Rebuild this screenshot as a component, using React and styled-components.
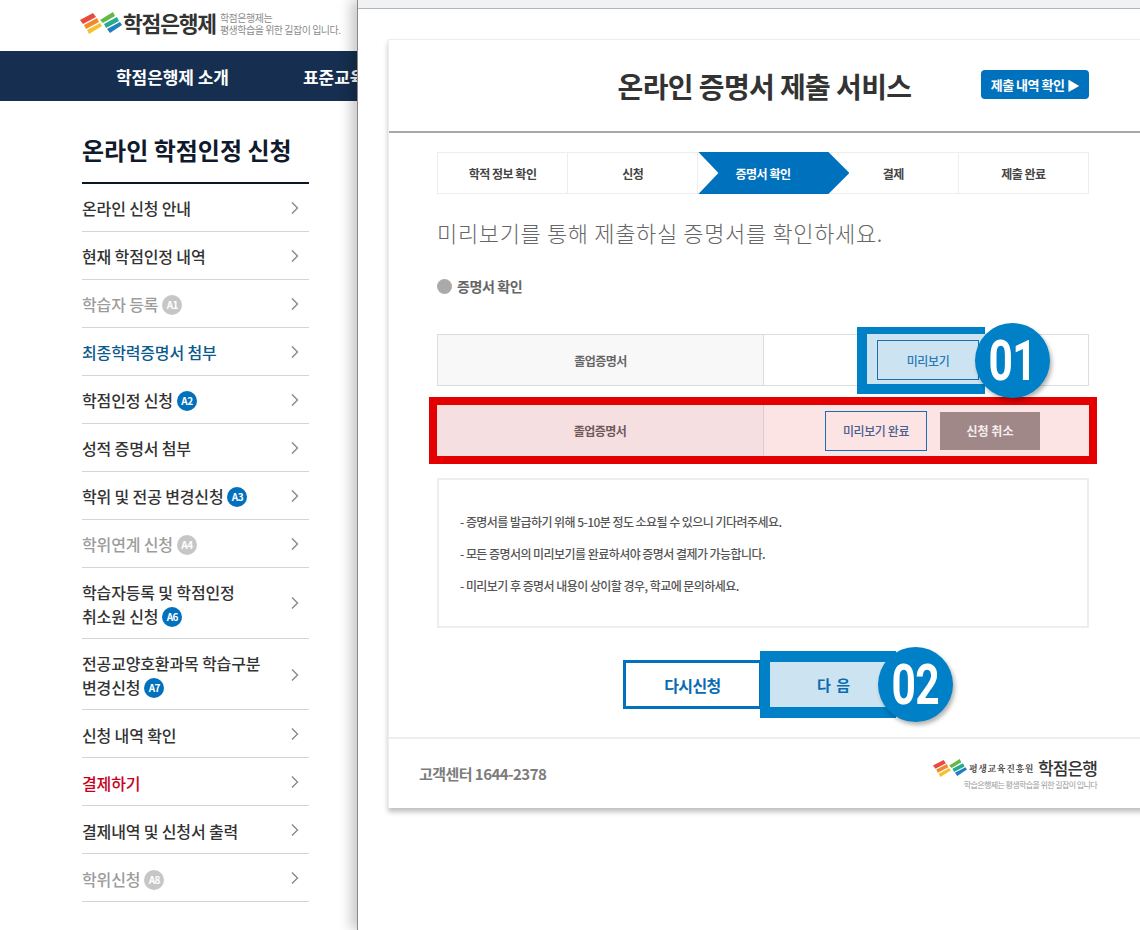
import React from 'react';
import styled, { createGlobalStyle } from 'styled-components';

const GlobalStyle = createGlobalStyle`
  html, body {
    margin: 0;
    padding: 0;
    background: #fff;
  }
  body {
    font-family: "Noto Sans CJK KR", "Noto Sans", sans-serif;
  }
  * {
    box-sizing: border-box;
  }
`;

const Page = styled.div`
  display: flex;
  width: 1140px;
  height: 930px;
  overflow: hidden;
`;

/* left: the site behind the popup */
const Site = styled.div`
  flex: none;
  width: 357px;
  overflow: hidden;
`;

const SiteTop = styled.div`
  display: flex;
  align-items: center;
  height: 51px;
  padding: 0 0 6px 80px;
`;

const BrandName = styled.span`
  margin-left: 1px;
  font-size: 21.5px;
  font-weight: 700;
  letter-spacing: -1.2px;
  color: #333;
  white-space: nowrap;
`;

const BrandNote = styled.span`
  margin: 2px 0 0 4px;
  font-size: 10px;
  line-height: 12px;
  letter-spacing: -0.5px;
  color: #8c8c8c;
  white-space: nowrap;
`;

const NavBar = styled.div`
  display: flex;
  align-items: center;
  gap: 74px;
  height: 50px;
  padding-left: 116px;
  background: #162f50;
`;

const NavItem = styled.span`
  font-size: 17px;
  font-weight: 700;
  letter-spacing: -0.05px;
  color: #fff;
  white-space: nowrap;
`;

const Side = styled.div`
  width: 227px;
  margin-left: 82px;
`;

const SideTitle = styled.h2`
  height: 83px;
  margin: 0;
  padding-top: 31px;
  border-bottom: 2px solid #0c1428;
  font-size: 24px;
  line-height: 36px;
  font-weight: 700;
  color: #111a2c;
  white-space: nowrap;
`;

const SideRow = styled.div`
  display: flex;
  align-items: center;
  justify-content: space-between;
  height: ${(p) => (p.$double ? '71.4px' : '47.95px')};
  padding-right: 10px;
  border-bottom: 1px solid #d4d4d4;
`;

const colors = { normal: '#333', muted: '#9c9c9c', link: '#0b5a8c', alert: '#c8001e' };

const SideLabel = styled.span`
  padding-top: 2px;
  font-size: 16px;
  line-height: 24px;
  font-weight: 500;
  letter-spacing: -0.15px;
  color: ${(p) => colors[p.$tone || 'normal']};
`;

const Badge = styled.span`
  display: inline-flex;
  align-items: center;
  justify-content: center;
  width: 20px;
  height: 20px;
  margin-left: 4px;
  border-radius: 50%;
  vertical-align: 2px;
  background: ${(p) => (p.$off ? '#c6c6c6' : '#0071bc')};
  font-size: 10px;
  font-weight: 700;
  letter-spacing: -0.5px;
  color: #fff;
`;

const ChevronMark = styled.svg`
  flex: none;
  margin-top: 1px;
`;

/* right: popup window */
const Popup = styled.div`
  position: relative;
  flex: 1;
  border-left: 1px solid #8a8a8a;
  background: #fff;
  box-shadow: -6px 0 12px rgba(0, 0, 0, 0.22);
`;

const WindowBar = styled.div`
  height: 9px;
  border-bottom: 1px solid #b4b4b4;
  background: #f1f2f4;
`;

const Card = styled.div`
  width: 760px;
  height: 769px;
  margin: 30px 0 0 30px;
  border: 1px solid #eee;
  border-bottom: 0;
  background: #fff;
  box-shadow: 0 4px 5px rgba(0, 0, 0, 0.25);
`;

const CardHead = styled.div`
  display: grid;
  grid-template-columns: 1fr auto 1fr;
  align-items: center;
  height: 93px;
  padding: 0 58px;
  border-bottom: 2px solid #a8a8a8;
`;

const CardTitle = styled.h1`
  grid-column: 2;
  margin: 0 7px 0 0;
  font-size: 28px;
  font-weight: 700;
  letter-spacing: -0.6px;
  color: #333;
  white-space: nowrap;
`;

const HistoryButton = styled.span`
  justify-self: end;
  display: flex;
  align-items: center;
  justify-content: center;
  width: 108px;
  height: 29px;
  margin-top: -2px;
  border-radius: 4px;
  background: #0071bc;
  font-size: 13px;
  font-weight: 700;
  letter-spacing: -0.5px;
  color: #fff;
  white-space: nowrap;
`;

const Body = styled.div`
  width: 652px;
  margin-left: 48px;
`;

const Steps = styled.div`
  display: flex;
  height: 42px;
  margin-top: 19px;
  border: 1px solid #eee;
`;

const Step = styled.div`
  position: relative;
  z-index: ${(p) => (p.$active ? 1 : 0)};
  flex: 1;
  display: flex;
  align-items: center;
  justify-content: center;
  border-left: ${(p) => (p.$first ? '0' : '1px solid #eee')};
  font-size: 12px;
  font-weight: 700;
  letter-spacing: -0.5px;
  color: ${(p) => (p.$active ? '#fff' : '#444')};

  ${(p) =>
    p.$active &&
    `
    &::before {
      content: '';
      position: absolute;
      top: -1px;
      left: 0;
      width: 151px;
      height: 42px;
      background: #0071bc;
      clip-path: polygon(0 0, 130px 0, 151px 50%, 130px 100%, 0 100%, 20px 50%);
    }
  `}
`;

const StepText = styled.span`
  position: relative;
`;

const Lead = styled.p`
  height: 34px;
  margin: 21px 0 0;
  font-size: 22px;
  line-height: 34px;
  font-weight: 300;
  letter-spacing: 0.65px;
  color: #666;
  white-space: nowrap;
`;

const SectionTitle = styled.h3`
  display: flex;
  align-items: center;
  gap: 5px;
  height: 20px;
  margin: 27px 0 0;
  font-size: 14px;
  font-weight: 700;
  letter-spacing: -0.4px;
  color: #666;
`;

const Dot = styled.i`
  width: 15px;
  height: 15px;
  border-radius: 50%;
  background: #aaa;
`;

const DocRow = styled.div`
  display: grid;
  grid-template-columns: ${(p) => (p.$flagged ? '327px' : '326px')} 1fr;
  height: ${(p) => (p.$flagged ? '51px' : '52px')};
  margin-top: ${(p) => (p.$flagged ? '19px' : '38px')};
  border: ${(p) => (p.$flagged ? '0' : '1px solid #ddd')};
  outline: ${(p) => (p.$flagged ? '8px solid #e40000' : 'none')};
`;

const DocName = styled.div`
  display: flex;
  align-items: center;
  justify-content: center;
  border-right: 1px solid ${(p) => (p.$flagged ? '#e3c8c8' : '#ddd')};
  background: ${(p) => (p.$flagged ? '#f6dfe0' : '#f8f8f8')};
  font-size: 12px;
  font-weight: 700;
  letter-spacing: -0.5px;
  color: ${(p) => (p.$flagged ? '#6e5a5a' : '#666')};
`;

const DocActions = styled.div`
  display: flex;
  align-items: center;
  gap: 13px;
  padding-left: ${(p) => (p.$flagged ? '61px' : '113px')};
  background: ${(p) => (p.$flagged ? '#fde4e4' : '#fff')};
`;

const Callout = styled.div`
  position: relative;
  width: 102px;
  height: 40px;
`;

const CalloutFrame = styled.div`
  position: absolute;
  top: -13px;
  left: -20px;
  width: 128px;
  height: 67px;
  border: solid #0080c6;
  border-width: 7px 0 10px 10px;
  background: #cce3f2;
`;

const OutlineButton = styled.span`
  position: relative;
  display: flex;
  align-items: center;
  justify-content: center;
  width: 102px;
  height: 40px;
  border: 1px solid #1b6fb0;
  background: ${(p) => (p.$filled ? '#cce3f2' : 'transparent')};
  font-size: 12px;
  font-weight: 500;
  letter-spacing: -0.4px;
  color: ${(p) => (p.$filled ? '#2a7ab8' : '#4a5f8c')};
  white-space: nowrap;
`;

const CancelButton = styled.span`
  display: flex;
  align-items: center;
  justify-content: center;
  width: 100px;
  height: 38px;
  background: #a08888;
  font-size: 12px;
  font-weight: 700;
  color: #f6eeee;
`;

const Marker = styled.span`
  position: absolute;
  z-index: 2;
  top: ${(p) => p.$top};
  left: ${(p) => p.$left};
  display: flex;
  align-items: center;
  justify-content: center;
  width: 75px;
  height: 75px;
  border-radius: 50%;
  background: #0080c6;
  box-shadow: 2px 3px 4px rgba(0, 0, 0, 0.3);
`;

const MarkerText = styled.span`
  display: block;
  font-family: Roboto, "Liberation Sans", sans-serif;
  font-size: 56px;
  line-height: 1;
  font-weight: 700;
  letter-spacing: -1px;
  color: #fff;
  transform: scaleX(0.76);
`;

const Notes = styled.div`
  display: flex;
  flex-direction: column;
  gap: 13px;
  height: 150px;
  margin-top: 22px;
  padding: 32px 0 0 21px;
  border: 2px solid #eee;
`;

const Note = styled.p`
  margin: 0;
  font-size: 12px;
  line-height: 19px;
  font-weight: 500;
  letter-spacing: -0.55px;
  color: #555;
`;

const ButtonRow = styled.div`
  position: relative;
  display: flex;
  align-items: center;
  height: 67px;
  margin-top: 23px;
  padding-left: 186px;
`;

const AgainButton = styled.span`
  display: flex;
  align-items: center;
  justify-content: center;
  width: 139px;
  height: 49px;
  border: 3px solid #0071bc;
  font-size: 16px;
  font-weight: 700;
  letter-spacing: -0.6px;
  color: #0a6cb0;
`;

const NextButton = styled.span`
  display: flex;
  align-items: center;
  justify-content: center;
  width: 136px;
  height: 67px;
  margin-left: -2px;
  padding-left: 2px;
  border: solid #0080c6;
  border-width: 11px 0 11px 10px;
  background: #cce3f2;
  font-size: 15px;
  font-weight: 700;
  letter-spacing: 1px;
  color: #0a6cb0;
`;

const CardFoot = styled.div`
  display: flex;
  align-items: center;
  justify-content: space-between;
  height: 71px;
  margin-top: 19px;
  padding: 0 50px 0 30px;
  border-top: 2px solid #eee;
`;

const Contact = styled.span`
  font-size: 15px;
  font-weight: 700;
  letter-spacing: -0.55px;
  color: #7c7c7c;
`;

const FootBrand = styled.div`
  display: flex;
  flex-direction: column;
  align-items: flex-end;
`;

const FootRow = styled.div`
  display: flex;
  align-items: center;
  height: 22px;
`;

const FootOrg = styled.span`
  margin: 0 4px 0 2px;
  font-family: "Noto Serif CJK KR", "Noto Sans CJK KR", serif;
  font-size: 9px;
  font-weight: 700;
  letter-spacing: 0.6px;
  color: #444;
  white-space: nowrap;
`;

const FootName = styled.span`
  font-size: 17px;
  line-height: 22px;
  font-weight: 500;
  letter-spacing: -0.9px;
  color: #333;
  white-space: nowrap;
`;

const FootNote = styled.span`
  font-size: 8px;
  line-height: 11px;
  letter-spacing: -0.6px;
  color: #999;
  white-space: nowrap;
`;

function BrandMark({ width = 42, height = 22 }) {
  return (
    <svg width={width} height={height} viewBox="0 0 42 22">
      <polygon points="0,8 13,1 16,5 3,12" fill="#ea4a3c" />
      <polygon points="4,13 17,6 19,10 6,17" fill="#f08a2c" />
      <polygon points="7,18 20,11 22,14 9,22" fill="#f6c12e" />
      <polygon points="20,8 33,0 35,4 23,11" fill="#63b946" />
      <polygon points="24,12 37,5 39,9 26,16" fill="#27ab8e" />
      <polygon points="27,17 40,10 42,13 30,21" fill="#1f7fc0" />
    </svg>
  );
}

function Chevron() {
  return (
    <ChevronMark width="8" height="14" viewBox="0 0 8 14">
      <polyline points="1,1.5 6.5,7 1,12.5" fill="none" stroke="#888" strokeWidth="1.4" />
    </ChevronMark>
  );
}

const menu = [
  { lines: ['온라인 신청 안내'] },
  { lines: ['현재 학점인정 내역'] },
  { lines: ['학습자 등록'], badge: 'A1', off: true, tone: 'muted' },
  { lines: ['최종학력증명서 첨부'], tone: 'link' },
  { lines: ['학점인정 신청'], badge: 'A2' },
  { lines: ['성적 증명서 첨부'] },
  { lines: ['학위 및 전공 변경신청'], badge: 'A3' },
  { lines: ['학위연계 신청'], badge: 'A4', off: true, tone: 'muted' },
  { lines: ['학습자등록 및 학점인정', '취소원 신청'], badge: 'A6' },
  { lines: ['전공교양호환과목 학습구분', '변경신청'], badge: 'A7' },
  { lines: ['신청 내역 확인'] },
  { lines: ['결제하기'], tone: 'alert' },
  { lines: ['결제내역 및 신청서 출력'] },
  { lines: ['학위신청'], badge: 'A8', off: true, tone: 'muted' },
];

const steps = ['학적 정보 확인', '신청', '증명서 확인', '결제', '제출 완료'];

const notes = [
  '- 증명서를 발급하기 위해 5-10분 정도 소요될 수 있으니 기다려주세요.',
  '- 모든 증명서의 미리보기를 완료하셔야 증명서 결제가 가능합니다.',
  '- 미리보기 후 증명서 내용이 상이할 경우, 학교에 문의하세요.',
];

export default function App() {
  return (
    <Page>
      <GlobalStyle />
      <Site>
        <SiteTop>
          <BrandMark />
          <BrandName>학점은행제</BrandName>
          <BrandNote>
            학점은행제는
            <br />
            평생학습을 위한 길잡이 입니다.
          </BrandNote>
        </SiteTop>
        <NavBar>
          <NavItem>학점은행제 소개</NavItem>
          <NavItem>표준교육과정</NavItem>
        </NavBar>
        <Side>
          <SideTitle>온라인 학점인정 신청</SideTitle>
          {menu.map((item) => (
            <SideRow key={item.lines[0]} $double={item.lines.length > 1}>
              <SideLabel $tone={item.tone}>
                {item.lines.map((line, i) => (
                  <React.Fragment key={line}>
                    {i > 0 && <br />}
                    {line}
                  </React.Fragment>
                ))}
                {item.badge && <Badge $off={item.off}>{item.badge}</Badge>}
              </SideLabel>
              <Chevron />
            </SideRow>
          ))}
        </Side>
      </Site>

      <Popup>
        <WindowBar />
        <Card>
          <CardHead>
            <CardTitle>온라인 증명서 제출 서비스</CardTitle>
            <HistoryButton>제출 내역 확인 ▶</HistoryButton>
          </CardHead>
          <Body>
            <Steps>
              {steps.map((step, i) => (
                <Step key={step} $first={i === 0} $active={i === 2}>
                  <StepText>{step}</StepText>
                </Step>
              ))}
            </Steps>
            <Lead>미리보기를 통해 제출하실 증명서를 확인하세요.</Lead>
            <SectionTitle>
              <Dot />
              증명서 확인
            </SectionTitle>

            <DocRow>
              <DocName>졸업증명서</DocName>
              <DocActions>
                <Callout>
                  <CalloutFrame />
                  <OutlineButton $filled>미리보기</OutlineButton>
                  <Marker $top="-17px" $left="98px">
                    <MarkerText>01</MarkerText>
                  </Marker>
                </Callout>
              </DocActions>
            </DocRow>

            <DocRow $flagged>
              <DocName $flagged>졸업증명서</DocName>
              <DocActions $flagged>
                <OutlineButton>미리보기 완료</OutlineButton>
                <CancelButton>신청 취소</CancelButton>
              </DocActions>
            </DocRow>

            <Notes>
              {notes.map((note) => (
                <Note key={note}>{note}</Note>
              ))}
            </Notes>

            <ButtonRow>
              <AgainButton>다시신청</AgainButton>
              <NextButton>다 음</NextButton>
              <Marker $top="-4px" $left="441px">
                <MarkerText>02</MarkerText>
              </Marker>
            </ButtonRow>
          </Body>
          <CardFoot>
            <Contact>고객센터 1644-2378</Contact>
            <FootBrand>
              <FootRow>
                <BrandMark width={34} height={18} />
                <FootOrg>평생교육진흥원</FootOrg>
                <FootName>학점은행</FootName>
              </FootRow>
              <FootNote>학습은행제는 평생학습을 위한 길잡이 입니다</FootNote>
            </FootBrand>
          </CardFoot>
        </Card>
      </Popup>
    </Page>
  );
}
